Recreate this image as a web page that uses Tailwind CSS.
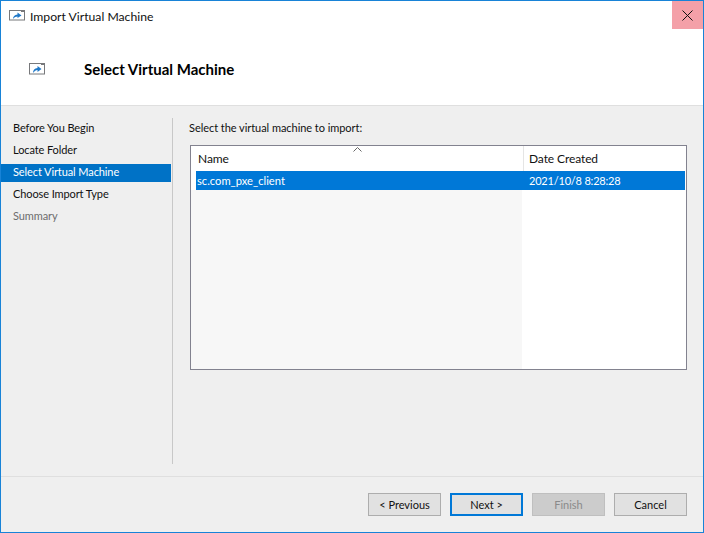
<!DOCTYPE html>
<html lang="en">
<head>
    <meta charset="UTF-8">
    <script src="https://cdn.jsdelivr.net/npm/@tailwindcss/browser@4"></script>
    <title>Import Virtual Machine</title>
</head>
<body class="w-[704px] h-[533px] overflow-hidden bg-[#efefef]">
    <div class="w-[704px] h-[533px] border border-[#1883d7] flex flex-col font-['Lato',sans-serif] text-[11px] text-[#111]">

        <!-- title + header -->
        <div class="h-[104px] bg-white border-b border-[#dfdfdf] box-content flex flex-col shrink-0">
            <div class="h-[28px] flex items-start">
                <svg class="ml-[8px] mt-[9px]" width="17" height="11" viewBox="0 0 17 11"><rect x="0.5" y="0.5" width="15" height="9.5" fill="#fff" stroke="#77787b"/><path d="M12 1.5h3" stroke="#77787b"/><path d="M4 9 C4 6.5 5.5 4.8 8.5 4.5 V2.5 L12.5 5.5 L8.5 8 V6.5 C7 6.5 5.5 7.2 4 9Z" fill="#1f78c8"/></svg>
                <span class="ml-[4px] mt-[7px] leading-[18px] text-[12.2px]">Import Virtual Machine</span>
                <div class="ml-auto w-[31px] h-[28px] bg-[#f4a0a8] flex items-center justify-center">
                    <svg width="11" height="11" viewBox="0 0 11 11"><path d="M0.5 0.5 L10.5 10.5 M10.5 0.5 L0.5 10.5" stroke="#111" stroke-width="1"/></svg>
                </div>
            </div>
            <div class="flex items-center mt-[30px]">
                <svg class="ml-[28px]" width="16" height="12" viewBox="0 0 16 12"><rect x="0.5" y="0.5" width="15" height="10.5" fill="#fff" stroke="#77787b"/><path d="M12 1.5h3" stroke="#77787b"/><path d="M4 10 C4 7 5.5 5.3 8.5 5 V3 L12.5 6 L8.5 9 V7 C7 7 5.5 8 4 10Z" fill="#1f78c8"/></svg>
                <span class="ml-[39px] font-bold text-[15px] leading-[20px] text-black">Select Virtual Machine</span>
            </div>
        </div>

        <!-- body -->
        <div class="h-[370px] flex shrink-0">
            <div class="w-[171px] h-[346px] mt-[12px] border-r border-[#c8c8c8] box-content flex flex-col tracking-[-0.1px]">
                <div class="h-[22px] pl-[12px] pb-[1px] flex items-center">Before You Begin</div>
                <div class="h-[22px] pl-[12px] pb-[1px] flex items-center">Locate Folder</div>
                <div class="h-[18px] my-[2px] pl-[12px] pb-[1px] flex items-center bg-[#0072c6] text-white w-[170px]">Select Virtual Machine</div>
                <div class="h-[22px] pl-[12px] pb-[1px] flex items-center">Choose Import Type</div>
                <div class="h-[22px] pl-[12px] pb-[1px] flex items-center text-[#6d6d6d]">Summary</div>
            </div>
            <div class="pl-[16px] pt-[13px] flex flex-col">
                <div class="leading-[18px] h-[26px] tracking-[-0.05px]">Select the virtual machine to import:</div>
                <div class="w-[497px] h-[225px] border border-[#82828f] bg-white ml-[1px] flex flex-col">
                    <div class="h-[25px] ml-[5px] flex shrink-0 relative text-[12px] tracking-[-0.1px]">
                        <svg class="absolute left-[157px] top-[1px]" width="9" height="5" viewBox="0 0 9 5"><path d="M0.5 4.5 L4.5 0.5 L8.5 4.5" fill="none" stroke="#666"/></svg>
                        <div class="w-[325px] pl-[2px] pt-[1px] border-r border-[#e5e5e5] box-content flex items-center">Name</div>
                        <div class="flex-1 pl-[5px] pt-[1px] flex items-center">Date Created</div>
                    </div>
                    <div class="h-[19px] ml-[5px] mr-[1px] pt-[1px] bg-[#0078d7] text-white flex items-center shrink-0">
                        <div class="w-[326px] pl-[1px] text-[11.2px]">sc.com_pxe_client</div>
                        <div class="pl-[7px] tracking-[-0.2px]">2021/10/8 8:28:28</div>
                    </div>
                    <div class="flex-1 flex">
                        <div class="w-[331px] bg-[#f7f7f7]"></div>
                    </div>
                </div>
            </div>
        </div>

        <!-- footer -->
        <div class="flex-1 border-t border-[#dfdfdf] flex justify-end items-start gap-[9px] pt-[16px] pr-[16px]">
            <button class="w-[73px] h-[23px] pt-[1px] border border-[#adadad] bg-[#e1e1e1]">&lt; Previous</button>
            <button class="w-[73px] h-[23px] pt-[1px] border-2 border-[#0078d7] bg-[#e1e1e1]">Next &gt;</button>
            <button class="w-[73px] h-[23px] pt-[1px] border border-[#bfbfbf] bg-[#cccccc] text-[#8a8a8a]">Finish</button>
            <button class="w-[73px] h-[23px] pt-[1px] border border-[#adadad] bg-[#e1e1e1]">Cancel</button>
        </div>
    </div>
</body>
</html>
